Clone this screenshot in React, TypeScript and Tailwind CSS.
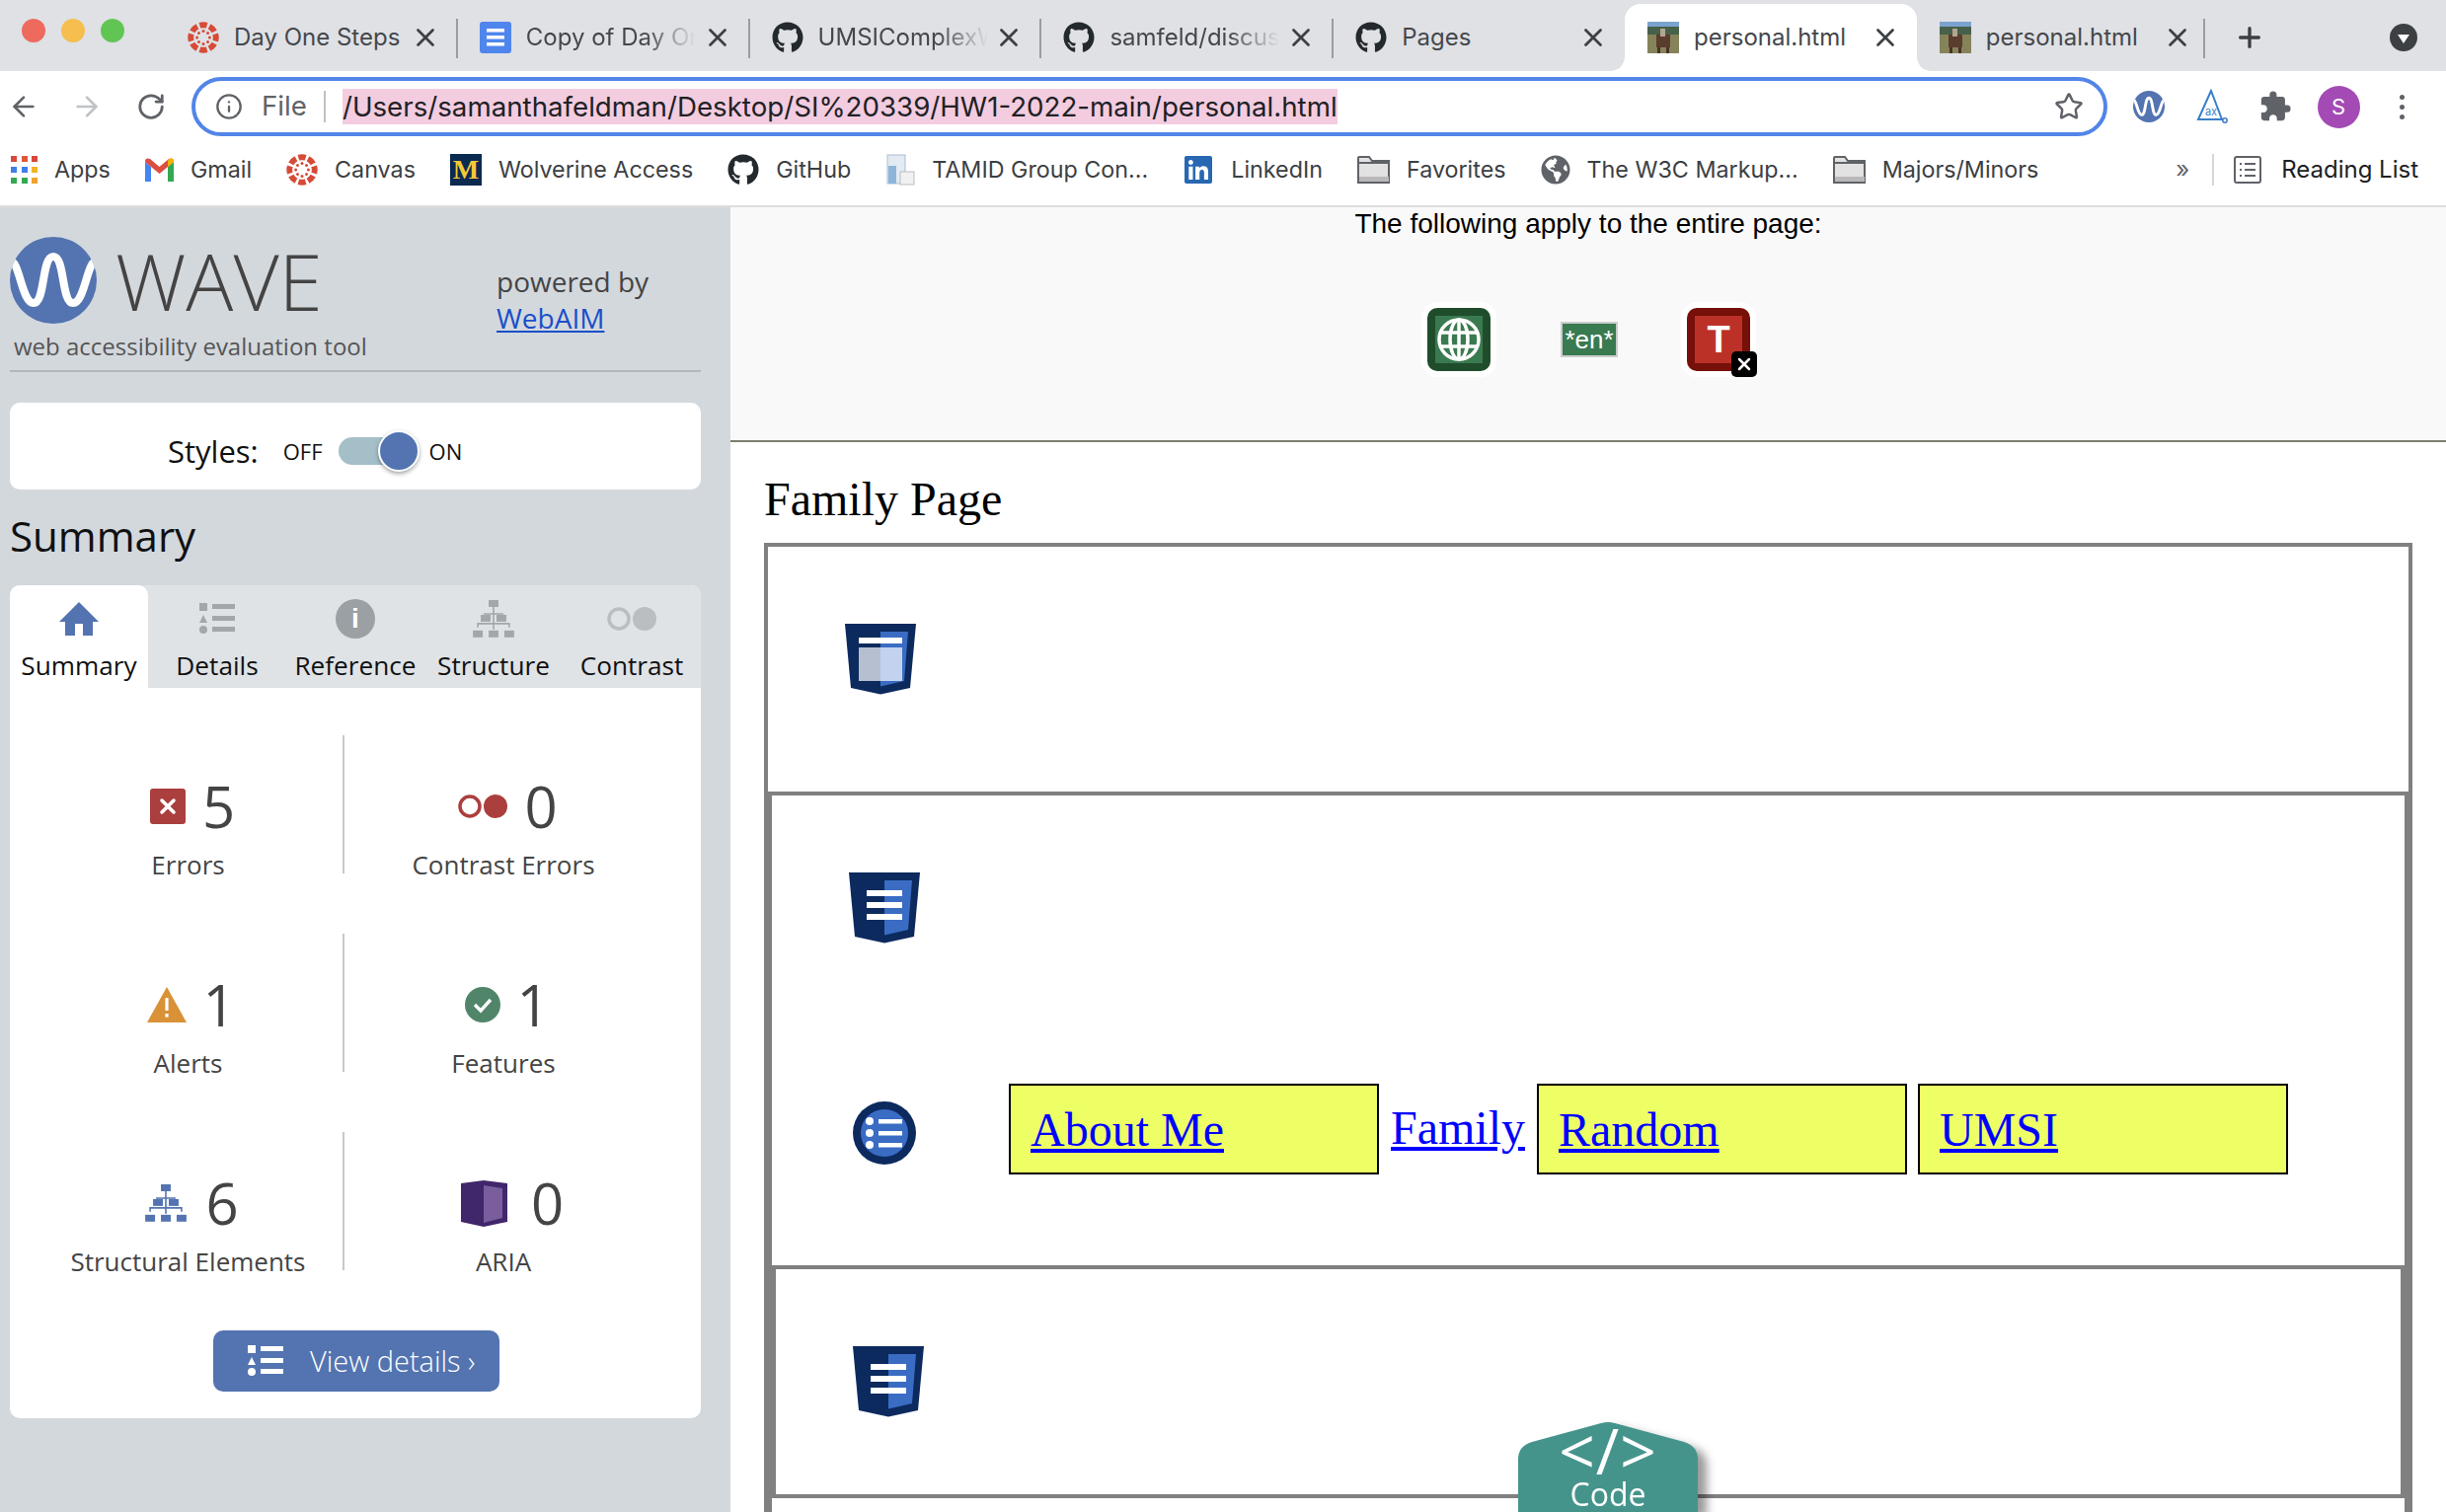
import { type ReactNode } from "react"
import { ArrowLeft, ArrowRight, Info, Plus, RotateCw, Star, X } from "lucide-react"
import { FaGithub, FaGlobeAmericas, FaLinkedin } from "react-icons/fa"
import { MdExtension } from "react-icons/md"

function CanvasIcon({ size = 32 }: { size?: number }) {
  const angles = [0, 45, 90, 135, 180, 225, 270, 315]
  return (
    <svg width={size} height={size} viewBox="0 0 32 32" className="shrink-0">
      {angles.map((a) => (
        <g key={a} transform={`rotate(${a} 16 16)`} fill="#d64b37">
          <path d="M11.5 1 Q16 -0.4 20.5 1 L18.8 6.6 Q16 5.8 13.2 6.6 Z" />
          <circle cx="16" cy="9.6" r="1.5" />
        </g>
      ))}
    </svg>
  )
}

function DocsIcon() {
  return (
    <svg width="32" height="32" viewBox="0 0 32 32" className="shrink-0">
      <rect width="32" height="32" rx="3" fill="#4f86ec" />
      <rect x="7" y="7" width="18" height="3.5" fill="#fff" />
      <rect x="7" y="14" width="18" height="3.5" fill="#fff" />
      <rect x="7" y="21" width="18" height="3.5" fill="#fff" />
    </svg>
  )
}

function PhotoIcon() {
  return (
    <svg width="32" height="32" viewBox="0 0 32 32" className="shrink-0">
      <rect width="32" height="6" fill="#7ba3cf" />
      <rect y="5" width="32" height="8" fill="#46604a" />
      <rect y="13" width="32" height="19" fill="#85835a" />
      <rect x="9" y="13" width="14" height="13" fill="#5b3d2e" />
      <rect x="13" y="7" width="5" height="8" fill="#b5a58c" />
      <rect x="10" y="26" width="3" height="6" fill="#4a3226" />
      <rect x="19" y="26" width="3" height="6" fill="#4a3226" />
    </svg>
  )
}

function AppsIcon() {
  const colors = ["#d9483b", "#e0583c", "#d9483b", "#3f7fe8", "#3f7fe8", "#f0b429", "#34a853", "#34a853", "#f0a32c"]
  return (
    <div className="grid w-[27px] shrink-0 grid-cols-3 gap-[5px]">
      {colors.map((c, i) => (
        <div key={i} className="h-[6px] w-[6px]" style={{ backgroundColor: c }} />
      ))}
    </div>
  )
}

function GmailIcon() {
  return (
    <svg width="29" height="24" viewBox="0 0 29 24" className="shrink-0">
      <path d="M0 4 V24 H6 V9 Z" fill="#4285f4" />
      <path d="M23 9 V24 H29 V4 Z" fill="#34a853" />
      <path d="M0 4 Q0 -1 5 1 L14.5 9 L24 1 Q29 -1 29 4 L23 9 L14.5 16 L6 9 Z" fill="#dc4e41" />
      <path d="M24 1 Q29 -1 29 4 L23 9 V3 Z" fill="#f4b400" />
    </svg>
  )
}

function MichiganIcon() {
  return (
    <div className="flex h-8 w-8 shrink-0 items-center justify-center bg-[#0b2a4f] font-['Liberation_Serif',serif] text-[28px] leading-none font-bold text-[#f5c838]">
      M
    </div>
  )
}

function SheetIcon() {
  return (
    <svg width="30" height="32" viewBox="0 0 30 32" className="shrink-0">
      <rect x="2" y="1" width="18" height="29" fill="#e3eaf2" stroke="#a9bdd2" />
      <rect x="3" y="12" width="8" height="18" fill="#8db5dc" />
      <rect x="15" y="18" width="14" height="13" fill="#f1f1f1" stroke="#bdbdbd" />
    </svg>
  )
}

function FolderIcon() {
  return (
    <svg width="33" height="28" viewBox="0 0 33 28" className="shrink-0">
      <path d="M1 27 V2 Q1 1 2 1 H12 L15 5 H32 V27 Z" fill="#e2e2e2" stroke="#5f6368" strokeWidth="2" />
      <rect x="2" y="21" width="30" height="5" fill="#b9b9b9" />
      <path d="M1 7 H32" stroke="#5f6368" strokeWidth="2" />
    </svg>
  )
}

function ReadingListIcon() {
  return (
    <svg width="28" height="28" viewBox="0 0 28 28">
      <rect x="1" y="1" width="26" height="26" rx="2" fill="none" stroke="#5f6368" strokeWidth="2" />
      <path d="M6 8 H8 M11 8 H22 M6 14 H8 M11 14 H22 M6 20 H8 M11 20 H22" stroke="#5f6368" strokeWidth="2" />
    </svg>
  )
}

function WaveLogo({ size }: { size: number }) {
  return (
    <svg width={size} height={size} viewBox="0 0 88 88" className="shrink-0">
      <clipPath id={`wave-${size}`}>
        <circle cx="44" cy="44" r="44" />
      </clipPath>
      <circle cx="44" cy="44" r="44" fill="#5374b0" />
      <path
        d="M0 24 C10 24 12 67 24 67 C36 67 32 20 44 20 C56 20 52 67 64 67 C76 67 78 24 88 24"
        fill="none"
        stroke="#fff"
        strokeWidth="8"
        clipPath={`url(#wave-${size})`}
      />
    </svg>
  )
}

function AxIcon() {
  return (
    <svg width="32" height="36" viewBox="0 0 32 36">
      <path d="M15 2 L2 31 H26 Z" fill="none" stroke="#3a7fc9" strokeWidth="2" />
      <circle cx="29" cy="32" r="2.2" fill="none" stroke="#3a7fc9" strokeWidth="1.5" />
      <text x="15" y="27" textAnchor="middle" fontSize="11" fill="#3a7fc9" fontFamily="Inter, sans-serif">
        ax
      </text>
    </svg>
  )
}

function HomeIcon() {
  return (
    <svg width="40" height="34" viewBox="0 0 40 34">
      <path d="M20 0 L40 20 H34 V34 H24 V22 H16 V34 H6 V20 H0 Z" fill="#5374b0" />
    </svg>
  )
}

function ListIcon({ color, bar }: { color: string; bar: string }) {
  return (
    <svg width="36" height="32" viewBox="0 0 36 32">
      <rect width="8" height="8" fill={color} />
      <path d="M4 12 L8 20 H0 Z" fill={color} />
      <circle cx="4" cy="27" r="4" fill={color} />
      <rect x="13" y="1" width="23" height="5" fill={bar} />
      <rect x="13" y="13" width="23" height="5" fill={bar} />
      <rect x="13" y="24" width="23" height="5" fill={bar} />
    </svg>
  )
}

function StructureIcon({ color, width }: { color: string; width: number }) {
  return (
    <svg width={width} height={width * 0.9} viewBox="0 0 42 38">
      <path d="M21 6 V30 M11 14 H31 M21 14 V22 M5 28 V24 H37 V28" stroke={color} strokeWidth="1.6" fill="none" />
      <rect x="16" width="10" height="7" fill={color} />
      <rect x="8" y="15" width="10" height="7" fill={color} />
      <rect x="24" y="15" width="10" height="7" fill={color} />
      <rect y="31" width="10" height="7" fill={color} />
      <rect x="16" y="31" width="10" height="7" fill={color} />
      <rect x="32" y="31" width="10" height="7" fill={color} />
    </svg>
  )
}

function ContrastIcon({ color, width }: { color: string; width: number }) {
  return (
    <svg width={width} height={width * 0.48} viewBox="0 0 50 24">
      <circle cx="12" cy="12" r="10" fill="none" stroke={color} strokeWidth="3.5" />
      <circle cx="38" cy="12" r="12" fill={color} />
    </svg>
  )
}

function ErrorIcon() {
  return (
    <div className="flex h-9 w-9 items-center justify-center rounded-[3px] bg-[#ab3f3e]">
      <X className="h-6 w-6 text-white" strokeWidth={3.5} />
    </div>
  )
}

function AlertIcon() {
  return (
    <svg width="40" height="36" viewBox="0 0 40 36">
      <path d="M20 0 L40 36 H0 Z" fill="#d99237" />
      <rect x="18.4" y="11" width="3.2" height="13" fill="#fff" />
      <rect x="18.4" y="27" width="3.2" height="3.6" fill="#fff" />
    </svg>
  )
}

function FeatureIcon() {
  return (
    <svg width="36" height="36" viewBox="0 0 36 36">
      <circle cx="18" cy="18" r="18" fill="#518569" />
      <path d="M10 18 L16 24 L26 13" fill="none" stroke="#fff" strokeWidth="3.4" />
    </svg>
  )
}

function AriaIcon() {
  return (
    <svg width="47" height="47" viewBox="0 0 47 47">
      <path d="M0 3 L23 0 L47 3 V42 L23 47 L0 42 Z" fill="#40266a" />
      <path d="M23 5 L42 8 V38 L23 43 Z" fill="#7a5d9c" />
    </svg>
  )
}

function Shield({ variant, className }: { variant: "header" | "text"; className: string }) {
  return (
    <svg width="72" height="72" viewBox="0 0 72 72" className={className}>
      <path d="M0 0 H72 L66 65 L36 71.5 L6 65 Z" fill="#0c2a5e" />
      <path d="M36 8 H64 L60 58 L36 63.5 Z" fill="#3a6cc4" />
      {variant === "header" ? (
        <>
          <rect x="14" y="14" width="44" height="6" fill="#fff" />
          <rect x="14" y="24" width="22" height="34" fill="#b5bfd0" />
          <rect x="36" y="24" width="22" height="34" fill="#c3d2ee" />
        </>
      ) : (
        <>
          <rect x="18" y="18" width="36" height="6" fill="#fff" />
          <rect x="18" y="30" width="36" height="6" fill="#fff" />
          <rect x="18" y="42" width="36" height="6" fill="#fff" />
        </>
      )}
    </svg>
  )
}

function NavIcon() {
  return (
    <svg width="64" height="64" viewBox="0 0 64 64" className="shrink-0">
      <circle cx="32" cy="32" r="32" fill="#0c2a5e" />
      <circle cx="32" cy="32" r="24" fill="#3a6cc4" />
      {[20, 32, 44].map((y) => (
        <g key={y} fill="#fff">
          <circle cx="17" cy={y} r="4" />
          <rect x="26" y={y - 2} width="24" height="4.5" />
        </g>
      ))}
    </svg>
  )
}

function BrowserTab({ icon, title, fade, active }: { icon: ReactNode; title: string; fade?: boolean; active?: boolean }) {
  return (
    <div
      className={`relative flex h-[68px] w-[295.8px] shrink-0 items-center pl-[23px] ${active ? "rounded-t-[16px] bg-white" : ""}`}
    >
      {active && (
        <>
          <span className="absolute bottom-0 left-[-14px] h-[14px] w-[14px] bg-[radial-gradient(circle_at_0_0,transparent_13.5px,white_14px)]" />
          <span className="absolute right-[-14px] bottom-0 h-[14px] w-[14px] bg-[radial-gradient(circle_at_100%_0,transparent_13.5px,white_14px)]" />
        </>
      )}
      {icon}
      <div
        className={`ml-[15px] w-[172px] overflow-hidden text-[24px] whitespace-nowrap text-[#45474b] ${fade ? "[mask-image:linear-gradient(to_right,black_70%,transparent)]" : ""}`}
      >
        {title}
      </div>
      <X className="ml-auto mr-[17px] h-[30px] w-[30px] shrink-0 text-[#3c4043]" strokeWidth={2.2} />
    </div>
  )
}

function TabDivider({ className = "mx-[-1px]" }: { className?: string }) {
  return <div className={`z-10 mb-[13px] h-10 w-[2px] shrink-0 bg-[#9a9ca0] ${className}`} />
}

function Bookmark({ icon, label }: { icon: ReactNode; label: string }) {
  return (
    <div className="flex items-center gap-[17px]">
      {icon}
      <span className="whitespace-nowrap text-[23.3px] text-[#3c4043]">{label}</span>
    </div>
  )
}

function SideTab({ icon, label, active }: { icon: ReactNode; label: string; active?: boolean }) {
  return (
    <div className={`flex w-[140px] flex-col items-center rounded-t-[10px] ${active ? "bg-white" : ""}`}>
      <div className="flex h-[52px] items-center pt-[16px]">{icon}</div>
      <div className="mt-[11px] text-[26.2px] leading-[36px] whitespace-nowrap text-[#111]">{label}</div>
    </div>
  )
}

function Stat({
  icon,
  count,
  label,
  row,
  divider,
  className,
}: {
  icon: ReactNode
  count: number
  label: string
  row: string
  divider?: boolean
  className: string
}) {
  return (
    <div className={`h-[140px] ${divider ? "border-r-2 border-[#c8c8c8]" : ""} ${className}`}>
      <div className={`mt-[44px] flex h-[56px] items-center justify-center ${row}`}>
        {icon}
        <span className="text-[58px] leading-none text-[#444]">{count}</span>
      </div>
      <div className="mt-[13px] text-center text-[26px] leading-[36px] whitespace-nowrap text-[#444]">{label}</div>
    </div>
  )
}

function NavBox({ label }: { label: string }) {
  return (
    <div className="h-[92px] w-[375px] shrink-0 border-[2.5px] border-black bg-[#eeff66] pt-[17px] pl-[20px]">
      <a className="text-[#0000ff] underline">{label}</a>
    </div>
  )
}

export default function App() {
  return (
    <div className="relative flex h-[1532px] w-[2478px] flex-col overflow-hidden bg-white font-['Inter',sans-serif]">
      {/* tab strip */}
      <div className="flex h-[72px] shrink-0 items-end bg-[#dfe1e5]">
        <div className="flex h-[72px] w-[167px] shrink-0 items-start gap-[16px] pt-[19px] pl-[22px]">
          <div className="h-6 w-6 rounded-full bg-[#ee6a5f]" />
          <div className="h-6 w-6 rounded-full bg-[#f6be4f]" />
          <div className="h-6 w-6 rounded-full bg-[#61c554]" />
        </div>
        <BrowserTab icon={<CanvasIcon />} title="Day One Steps" />
        <TabDivider />
        <BrowserTab icon={<DocsIcon />} title="Copy of Day One Steps" fade />
        <TabDivider />
        <BrowserTab icon={<FaGithub className="h-8 w-8 shrink-0 text-[#24292e]" />} title="UMSIComplexWeb" fade />
        <TabDivider />
        <BrowserTab icon={<FaGithub className="h-8 w-8 shrink-0 text-[#24292e]" />} title="samfeld/discussion" fade />
        <TabDivider />
        <BrowserTab icon={<FaGithub className="h-8 w-8 shrink-0 text-[#24292e]" />} title="Pages" />
        <BrowserTab icon={<PhotoIcon />} title="personal.html" active />
        <BrowserTab icon={<PhotoIcon />} title="personal.html" />
        <TabDivider className="ml-[-6px]" />
        <div className="flex h-[68px] flex-1 items-center pl-[29px]">
          <Plus className="h-8 w-8 text-[#3c4043]" strokeWidth={2.5} />
          <div className="ml-[126px] flex h-7 w-7 items-center justify-center rounded-full bg-[#3c4043]">
            <div className="mt-[3px] h-0 w-0 border-x-[6px] border-t-[9px] border-x-transparent border-t-white" />
          </div>
        </div>
      </div>

      {/* toolbar */}
      <div className="flex h-[72px] shrink-0 items-center">
        <div className="flex w-12 justify-center">
          <ArrowLeft className="h-8 w-8 text-[#5f6368]" strokeWidth={2} />
        </div>
        <div className="ml-4 flex w-12 justify-center">
          <ArrowRight className="h-8 w-8 text-[#c0c2c5]" strokeWidth={2} />
        </div>
        <div className="ml-[17px] flex w-12 justify-center">
          <RotateCw className="h-[30px] w-[30px] text-[#5f6368]" strokeWidth={2.2} />
        </div>
        <div className="ml-[17px] flex h-[60px] w-[1941px] shrink-0 items-center rounded-full border-4 border-[#5385e8] pl-5">
          <Info className="h-7 w-7 shrink-0 text-[#5f6368]" strokeWidth={2} />
          <span className="ml-[19px] text-[27.7px] text-[#5f6368]">File</span>
          <div className="ml-[17px] h-8 w-[2px] bg-[#bdc1c6]" />
          <div className="ml-[17px] h-9 bg-[#f3cce0] text-[27.7px] leading-9 whitespace-nowrap text-[#202124]">
            /Users/samanthafeldman/Desktop/SI%20339/HW1-2022-main/personal.html
          </div>
          <Star className="ml-auto mr-[20px] h-[30px] w-[30px] text-[#5f6368]" strokeWidth={2} />
        </div>
        <div className="ml-[10px] flex w-16 justify-center">
          <WaveLogo size={32} />
        </div>
        <div className="flex w-16 justify-center">
          <AxIcon />
        </div>
        <div className="flex w-16 justify-center">
          <MdExtension className="h-[34px] w-[34px] text-[#5f6368]" />
        </div>
        <div className="flex w-16 justify-center">
          <div className="flex h-[43px] w-[43px] items-center justify-center rounded-full bg-[#a34ab4] text-[22px] text-white">
            S
          </div>
        </div>
        <div className="flex w-16 flex-col items-center gap-[5px]">
          <div className="h-[5px] w-[5px] rounded-full bg-[#5f6368]" />
          <div className="h-[5px] w-[5px] rounded-full bg-[#5f6368]" />
          <div className="h-[5px] w-[5px] rounded-full bg-[#5f6368]" />
        </div>
      </div>

      {/* bookmarks */}
      <div className="flex h-[66px] shrink-0 items-center gap-[35px] border-b-2 border-[#dddddd] pb-2 pl-[11px]">
        <Bookmark icon={<AppsIcon />} label="Apps" />
        <Bookmark icon={<GmailIcon />} label="Gmail" />
        <Bookmark icon={<CanvasIcon />} label="Canvas" />
        <Bookmark icon={<MichiganIcon />} label="Wolverine Access" />
        <Bookmark icon={<FaGithub className="h-8 w-8 shrink-0 text-[#24292e]" />} label="GitHub" />
        <Bookmark icon={<SheetIcon />} label="TAMID Group Con..." />
        <Bookmark icon={<FaLinkedin className="h-8 w-8 shrink-0 text-[#2867b2]" />} label="LinkedIn" />
        <Bookmark icon={<FolderIcon />} label="Favorites" />
        <Bookmark icon={<FaGlobeAmericas className="h-[30px] w-[30px] shrink-0 text-[#5f6368]" />} label="The W3C Markup..." />
        <Bookmark icon={<FolderIcon />} label="Majors/Minors" />
        <div className="ml-auto flex items-center gap-[20px] pr-[28px]">
          <span className="mr-[3px] text-[24px] text-[#5f6368]">»</span>
          <div className="h-8 w-[2px] bg-[#d5d7da]" />
          <ReadingListIcon />
          <span className="text-[24px] text-[#202124]">Reading List</span>
        </div>
      </div>

      <div className="flex min-h-0 flex-1">
        {/* WAVE sidebar */}
        <aside className="w-[740px] shrink-0 bg-[#d3d8dd] pt-[30px] pr-[30px] pl-[10px] font-['Open_Sans',sans-serif]">
          <div className="flex h-[137px] border-b-2 border-[#b2b7bb]">
            <div className="w-[493px]">
              <div className="flex h-[88px] items-center gap-[19px]">
                <WaveLogo size={88} />
                <span className="text-[80px] leading-none font-light text-[#444]">WAVE</span>
              </div>
              <div className="mt-[6px] pl-1 text-[24px] leading-[34px] text-[#555]">web accessibility evaluation tool</div>
            </div>
            <div className="pt-[27px] text-[28px] leading-[37px] text-[#444]">
              <div>powered by</div>
              <a className="text-[#1a4fc9] underline">WebAIM</a>
            </div>
          </div>

          <div className="mt-[31px] flex h-[88px] items-center rounded-[10px] bg-white pt-[10px] pl-[160px]">
            <span className="text-[31px] text-[#111]">Styles:</span>
            <span className="ml-[25px] text-[22px] text-[#111]">OFF</span>
            <div className="relative ml-[16px] h-7 w-[72px] rounded-full bg-[#a5bfc9]">
              <div className="absolute top-[-7px] right-[-10px] h-[42px] w-[42px] rounded-full border-2 border-white bg-[#5374b0] shadow-[0_2px_4px_rgba(0,0,0,0.35)]" />
            </div>
            <span className="ml-5 text-[22px] text-[#111]">ON</span>
          </div>

          <h2 className="mt-[18px] text-[42px] leading-[58px] text-[#111]">Summary</h2>

          <div className="mt-[21px] rounded-[10px] bg-white pb-[27px]">
            <div className="flex h-[104px] rounded-t-[10px] bg-[#dfe3e6]">
              <SideTab active icon={<HomeIcon />} label="Summary" />
              <SideTab icon={<ListIcon color="#a3a7a9" bar="#a3a7a9" />} label="Details" />
              <SideTab
                icon={
                  <div className="flex h-10 w-10 items-center justify-center rounded-full bg-[#9aa0a3] font-['Liberation_Sans',sans-serif] text-[28px] font-bold text-white">
                    i
                  </div>
                }
                label="Reference"
              />
              <SideTab icon={<StructureIcon color="#a3a7a9" width={42} />} label="Structure" />
              <SideTab icon={<ContrastIcon color="#babec0" width={50} />} label="Contrast" />
            </div>

            <div className="flex flex-col gap-[61px] pt-[48px]">
              <div className="flex">
                <Stat divider className="w-[339px] pl-[24px]" row="gap-[17px] pl-[9px]" icon={<ErrorIcon />} count={5} label="Errors" />
                <Stat className="w-[322px]" row="gap-[17px] pl-[9px]" icon={<ContrastIcon color="#ab3f3e" width={50} />} count={0} label="Contrast Errors" />
              </div>
              <div className="flex">
                <Stat divider className="w-[339px] pl-[24px]" row="gap-[16px] pl-[7px]" icon={<AlertIcon />} count={1} label="Alerts" />
                <Stat className="w-[322px]" row="gap-[16px] pl-[8px]" icon={<FeatureIcon />} count={1} label="Features" />
              </div>
              <div className="flex">
                <Stat divider className="w-[339px] pl-[24px]" row="gap-[19px] pl-[8px]" icon={<StructureIcon color="#5374b0" width={42} />} count={6} label="Structural Elements" />
                <Stat className="w-[322px]" row="gap-[24px] pl-[18px]" icon={<AriaIcon />} count={0} label="ARIA" />
              </div>
            </div>

            <div className="mt-[61px] ml-[206px] flex h-[62px] w-[290px] items-center rounded-[10px] bg-[#5374b0] pl-[35px]">
              <ListIcon color="#fff" bar="#fff" />
              <span className="ml-[27px] text-[29px] font-light whitespace-nowrap text-white">View details ›</span>
            </div>
          </div>
        </aside>

        {/* page under test */}
        <main className="min-w-0 flex-1 font-['Liberation_Serif',serif] text-[48px] text-black">
          <div className="h-[238px] border-b-2 border-[#7a8070] bg-[#f9f9f9] font-['Liberation_Sans',sans-serif]">
            <div className="text-center text-[28px] leading-[34px]">The following apply to the entire page:</div>
            <div className="mt-[62px] ml-[700px] flex items-center">
              <div className="flex h-[76px] w-[76px] items-center justify-center rounded-[16px] bg-white">
                <div className="flex h-16 w-16 items-center justify-center rounded-[10px] bg-[#1f4d2b]">
                  <div className="flex h-12 w-12 items-center justify-center bg-[#3a7a50]">
                    <svg width="46" height="46" viewBox="0 0 46 46" fill="none" stroke="#fff" strokeWidth="3.5">
                      <circle cx="23" cy="23" r="20" />
                      <ellipse cx="23" cy="23" rx="9" ry="20" />
                      <path d="M3 16 H43 M3 30 H43 M23 3 V43" />
                    </svg>
                  </div>
                </div>
              </div>
              <div className="ml-[65px] flex h-9 w-[58px] items-center justify-center border-2 border-[#cccccc] bg-[#3a7a50] text-[26px] whitespace-nowrap text-white">
                *en*
              </div>
              <div className="relative ml-[64px] flex h-[76px] w-[76px] items-center justify-center rounded-[16px] bg-white">
                <div className="flex h-16 w-16 items-center justify-center rounded-[10px] bg-[#761009]">
                  <div className="flex h-12 w-12 items-center justify-center bg-[#bb3128] text-[38px] leading-none font-bold text-white">
                    T
                  </div>
                </div>
                <div className="absolute right-[-1px] bottom-0 flex h-[26px] w-[26px] items-center justify-center rounded-[5px] bg-black">
                  <X className="h-5 w-5 text-white" strokeWidth={3} />
                </div>
              </div>
            </div>
          </div>

          <div className="pr-[34px] pl-[34px]">
            <h1 className="mt-[30px] h-[72px] text-[48px] leading-[55px]">Family Page</h1>
            <div className="border-4 border-[#808080]">
              <div className="h-[248px] pt-[78px] pl-[78px]">
                <Shield variant="header" className="block" />
              </div>
              <div className="h-[800px] border-4 border-[#808080]">
                <div className="h-[232px] pt-[78px] pl-[78px]">
                  <Shield variant="text" className="block" />
                </div>
                <nav className="flex h-[244px] items-start gap-[11px] pt-[60px] leading-[55px]">
                  <div className="mt-[18px] mr-[83px] ml-[82px]">
                    <NavIcon />
                  </div>
                  <NavBox label="About Me" />
                  <a className="mx-[1px] mt-[17px] text-[#0000ff] underline">Family</a>
                  <NavBox label="Random" />
                  <NavBox label="UMSI" />
                </nav>
                <div className="h-[236px] border-4 border-[#808080] pt-[78px] pl-[78px]">
                  <Shield variant="text" className="block" />
                </div>
              </div>
            </div>
          </div>
        </main>
      </div>

      {/* WAVE code toggle */}
      <div className="absolute top-[1441px] left-[1538px] h-[91px] w-[182px] drop-shadow-[9px_6px_5px_rgba(0,0,0,0.4)]">
        <svg width="182" height="91" viewBox="0 0 182 91" className="absolute inset-0">
          <path d="M0 91 V38 Q0 24 14 20 L84 1 Q91 -1 98 1 L168 20 Q182 24 182 38 V91 Z" fill="#45948c" />
        </svg>
        <div className="relative flex flex-col items-center font-['Open_Sans',sans-serif] text-white">
          <span className="mt-[2px] h-[53px] text-[64px] leading-[53px] tracking-[1px]">&lt;/&gt;</span>
          <span className="text-[32px] leading-[36px]">Code</span>
        </div>
      </div>
    </div>
  )
}
